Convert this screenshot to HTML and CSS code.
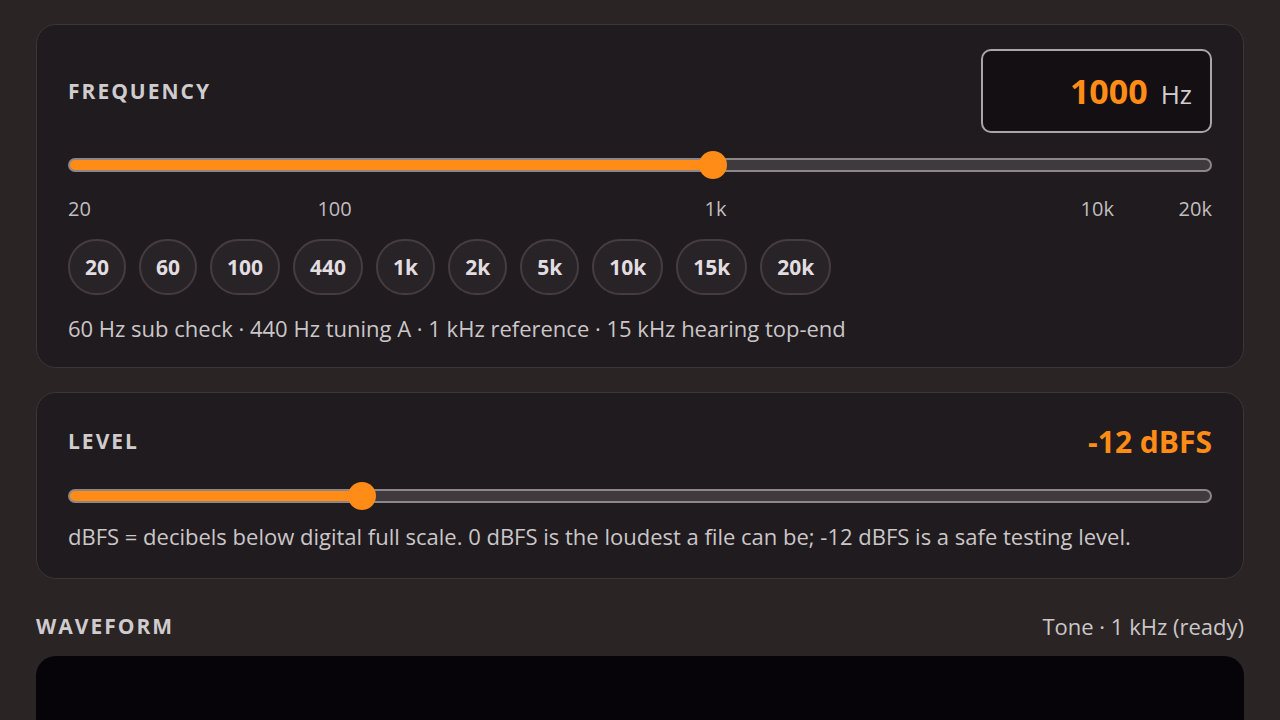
FILE: index.html
```html
<!DOCTYPE html>
<html lang="en">
<head>
    <meta charset="UTF-8">
    <meta name="viewport" content="width=device-width, initial-scale=1.0">
    <title>Tone Generator</title>
    <link rel="stylesheet" href="styles.css">
</head>
<body>
    <main class="page">
        <section class="card">
            <div class="card-head">
                <h2 class="label">Frequency</h2>
                <div class="freq-box">
                    <span class="freq-value">1000</span>
                    <span class="freq-unit">Hz</span>
                </div>
            </div>
            <input class="slider" type="range" min="0" max="1000" value="566" style="--fill: 56.6%">
            <div class="ticks">
                <span class="tick tick-start" style="left: 0%">20</span>
                <span class="tick" style="left: 23.3%">100</span>
                <span class="tick" style="left: 56.6%">1k</span>
                <span class="tick" style="left: 89.97%">10k</span>
                <span class="tick tick-end" style="left: 100%">20k</span>
            </div>
            <div class="presets">
                <button class="preset">20</button>
                <button class="preset">60</button>
                <button class="preset">100</button>
                <button class="preset">440</button>
                <button class="preset">1k</button>
                <button class="preset">2k</button>
                <button class="preset">5k</button>
                <button class="preset">10k</button>
                <button class="preset">15k</button>
                <button class="preset">20k</button>
            </div>
            <p class="hint">60 Hz sub check · 440 Hz tuning A · 1 kHz reference · 15 kHz hearing top-end</p>
        </section>

        <section class="card level-card">
            <div class="card-head">
                <h2 class="label">Level</h2>
                <span class="level-value">-12 dBFS</span>
            </div>
            <input class="slider" type="range" min="0" max="100" value="25" style="--fill: 25.8%">
            <p class="hint hint-tight">dBFS = decibels below digital full scale. 0 dBFS is the loudest a file can be; -12 dBFS is a safe testing level.</p>
        </section>

        <section class="waveform">
            <div class="wave-head">
                <h2 class="label">Waveform</h2>
                <span class="wave-status">Tone · 1 kHz (ready)</span>
            </div>
            <div class="scope"></div>
        </section>
    </main>
</body>
</html>
```

FILE: styles.css
```css
body {
    margin: 0;
    background-color: #2a2524;
    font-family: "Open Sans", "Noto Sans", sans-serif;
    color: #cdc8ca;
    overflow: hidden;
}
.page {
    padding: 24px 36px 0;
    display: flex;
    flex-direction: column;
    gap: 24px;
}
.card {
    background-color: #1f1b1e;
    border: 1px solid #3a3537;
    border-radius: 20px;
    padding: 24px 31px 24px;
}
.card-head {
    display: flex;
    justify-content: space-between;
    align-items: center;
    height: 84px;
    margin-bottom: 18px;
}
.label {
    margin: 0;
    font-size: 21px;
    font-weight: 700;
    letter-spacing: 2px;
    text-transform: uppercase;
    color: #d0cbcd;
}
.freq-box {
    display: flex;
    align-items: baseline;
    justify-content: flex-end;
    gap: 13px;
    width: 231px;
    height: 84px;
    box-sizing: border-box;
    padding: 0 18px;
    line-height: 80px;
    background-color: #140f13;
    border: 2px solid #aaa5a7;
    border-radius: 10px;
}
.freq-value {
    font-size: 34px;
    font-weight: 700;
    color: #ff8c16;
}
.freq-unit {
    font-size: 26px;
    color: #d2cdcf;
}
.level-value {
    font-size: 30px;
    font-weight: 700;
    color: #ff8c16;
}
.slider {
    -webkit-appearance: none;
    appearance: none;
    display: block;
    width: 100%;
    height: 28px;
    margin: 0;
    background: transparent;
}
.slider::-webkit-slider-runnable-track {
    height: 14px;
    box-sizing: border-box;
    border: 2px solid #8c8689;
    border-radius: 7px;
    background: linear-gradient(to right, #ff8c16 var(--fill), #3f3a3d var(--fill));
}
.slider::-webkit-slider-thumb {
    -webkit-appearance: none;
    width: 28px;
    height: 28px;
    margin-top: -9px;
    border: none;
    border-radius: 50%;
    background-color: #ff8c16;
}
.ticks {
    position: relative;
    height: 24px;
    margin-top: 18px;
    font-size: 20px;
    line-height: 24px;
    color: #c2bdbf;
}
.tick {
    position: absolute;
    top: 0;
    transform: translateX(-50%);
}
.tick-start {
    transform: none;
}
.tick-end {
    transform: translateX(-100%);
}
.presets {
    display: flex;
    gap: 13px;
    margin-top: 18px;
}
.preset {
    height: 56px;
    min-width: 58px;
    padding: 0 15px;
    font-family: inherit;
    font-size: 21px;
    font-weight: 700;
    color: #e2dde0;
    background-color: #282326;
    border: 2px solid #433d40;
    border-radius: 28px;
    cursor: pointer;
}
.hint {
    margin: 18px 0 0;
    font-size: 22px;
    line-height: 30px;
    color: #cbc6c8;
}
.level-card {
    padding-bottom: 27px;
}
.level-card .card-head {
    height: 48px;
    margin-bottom: 17px;
}
.hint-tight {
    margin-top: 11px;
}
.waveform {
    margin-top: 9px;
}
.wave-head {
    display: flex;
    justify-content: space-between;
    align-items: center;
    height: 28px;
    margin-bottom: 16px;
}
.wave-status {
    font-size: 22px;
    color: #cbc6c8;
}
.scope {
    height: 240px;
    background-color: #060409;
    border-radius: 20px;
}
```
